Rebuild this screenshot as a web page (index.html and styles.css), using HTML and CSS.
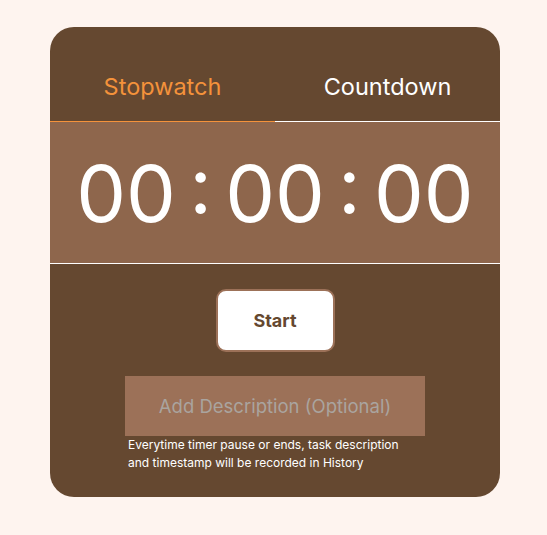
FILE: index.html
```html
<!DOCTYPE html>
<html>
<head>
<meta charset="utf-8">
<link rel="stylesheet" href="styles.css">
</head>
<body>
<div class="card">
  <div class="tabs">
    <div class="tab active">Stopwatch</div>
    <div class="tab">Countdown</div>
  </div>
  <div class="display">00 : 00 : 00</div>
  <div class="controls">
    <button class="start">Start</button>
    <div class="desc">
      <input class="desc-input" type="text" placeholder="Add Description (Optional)">
      <p class="hint">Everytime timer pause or ends, task description and timestamp will be recorded in History</p>
    </div>
  </div>
</div>
</body>
</html>
```

FILE: styles.css
```css
html, body {
  margin: 0;
  padding: 0;
  background: #fef4ef;
  font-family: Inter, "Liberation Sans", Arial, sans-serif;
}
body {
  padding-top: 27px;
}
.card {
  width: 450px;
  height: 470px;
  margin-left: 50px;
  background: #654830;
  border-radius: 24px;
  overflow: hidden;
  display: flex;
  flex-direction: column;
}
.tabs {
  display: flex;
  height: 95px;
}
.tab {
  flex: 1;
  display: flex;
  align-items: flex-start;
  justify-content: center;
  padding-top: 45px;
  box-sizing: border-box;
  font-size: 23.5px;
  color: #ffffff;
  border-bottom: 1px solid #ffffff;
}
.tab.active {
  color: #f4923b;
  border-bottom-color: #f4923b;
}
.display {
  height: 141px;
  background: #8e664c;
  border-bottom: 1px solid #ffffff;
  color: #ffffff;
  font-size: 79px;
  word-spacing: -9px;
  display: flex;
  align-items: center;
  justify-content: center;
}
.controls {
  display: flex;
  flex-direction: column;
  align-items: center;
  padding-top: 25px;
}
.start {
  width: 119px;
  height: 63px;
  background: #ffffff;
  border: 2px solid #9c7158;
  border-radius: 10px;
  color: #654830;
  font-family: Inter, "Liberation Sans", Arial, sans-serif;
  font-weight: bold;
  font-size: 18px;
  cursor: pointer;
}
.desc {
  margin-top: 24px;
  width: 300px;
}
.desc-input {
  display: block;
  width: 300px;
  height: 60px;
  box-sizing: border-box;
  border: none;
  outline: none;
  background: #9c7158;
  text-align: center;
  font-family: Inter, "Liberation Sans", Arial, sans-serif;
  font-size: 18.5px;
  color: #ffffff;
}
.desc-input::placeholder {
  color: #aaa49f;
}
.hint {
  margin: 0;
  padding: 0 0 0 3px;
  max-width: 285px;
  color: #ffffff;
  font-size: 12px;
  line-height: 18px;
}
```
